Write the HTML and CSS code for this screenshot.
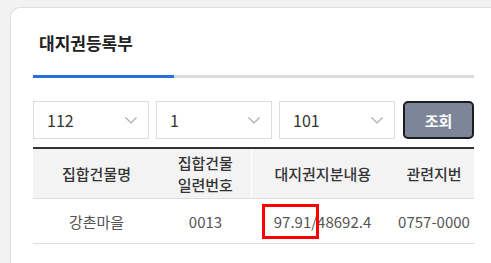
FILE: index.html
```html
<!DOCTYPE html>
<html>
<head>
  <title>대지권등록부</title>
  <link rel="stylesheet" href="styles.css">
</head>
<body>
  <div class="card">
    <h1 class="title">대지권등록부</h1>
    <div class="tab-bar"><div class="tab-active"></div></div>

    <div class="search">
      <div class="select"><span>112</span><svg class="chevron" viewBox="0 0 12 7"><path d="M0.5 0.5 L6 6 L11.5 0.5"/></svg></div>
      <div class="select"><span>1</span><svg class="chevron" viewBox="0 0 12 7"><path d="M0.5 0.5 L6 6 L11.5 0.5"/></svg></div>
      <div class="select"><span>101</span><svg class="chevron" viewBox="0 0 12 7"><path d="M0.5 0.5 L6 6 L11.5 0.5"/></svg></div>
      <button class="search-btn">조회</button>
    </div>

    <table class="result">
      <colgroup>
        <col class="c1"><col class="c2"><col class="c3"><col class="c4">
      </colgroup>
      <thead>
        <tr>
          <th>집합건물명</th>
          <th>집합건물<br>일련번호</th>
          <th class="sep">대지권지분내용</th>
          <th>관련지번</th>
        </tr>
      </thead>
      <tbody>
        <tr>
          <td>강촌마을</td>
          <td>0013</td>
          <td class="marked">97.91/48692.4<span class="highlight"></span></td>
          <td>0757-0000</td>
        </tr>
      </tbody>
    </table>
  </div>
</body>
</html>
```

FILE: styles.css
```css
body {
  margin: 0;
  background: #f2f2f2;
  font-family: "Noto Sans CJK KR", sans-serif;
  overflow: hidden;
}

.card {
  margin: 7px 0 0 10px;
  height: calc(100vh - 7px);
  background: #fff;
  border: 1px solid #ddd;
  border-right: none;
  border-bottom: none;
  border-radius: 10px 0 0 0;
  padding: 23px 0 0 22px;
  box-sizing: border-box;
}

.title {
  margin: 0 0 20px 6px;
  font-size: 17px;
  line-height: 24px;
  font-weight: 700;
  color: #222;
}

.tab-bar {
  width: 441px;
  height: 3px;
  background: #ddd;
}

.tab-active {
  width: 141px;
  height: 3px;
  background: #2670dc;
}

.search {
  display: flex;
  gap: 7px;
  width: 441px;
  margin-top: 23px;
}

.select {
  flex: 1;
  height: 38px;
  border: 1px solid #ddd;
  box-sizing: border-box;
  display: flex;
  align-items: center;
  justify-content: space-between;
  padding: 0 11px 0 13px;
  font-size: 16px;
  color: #333;
}

.chevron {
  width: 12px;
  height: 7px;
  fill: none;
  stroke: #aaa;
  stroke-width: 1.2;
}

.search-btn {
  width: 71px;
  height: 38px;
  margin-left: 1px;
  background: #7c8698;
  border: 2px solid #1c1c1c;
  border-radius: 5px;
  color: #fff;
  font-family: inherit;
  font-size: 15px;
  font-weight: 700;
}

.result {
  width: 441px;
  margin-top: 8px;
  border-collapse: collapse;
  table-layout: fixed;
  border-top: 2px solid #333;
}

.c1 { width: 127px; }
.c2 { width: 91px; }
.c3 { width: 143px; }
.c4 { width: 80px; }

.result th {
  height: 49px;
  padding: 0;
  background: #f3f3f3;
  border-bottom: 1px solid #ddd;
  font-size: 15px;
  font-weight: 500;
  line-height: 22px;
  color: #333;
}

.result th.sep {
  border-left: 1px solid #fff;
}

.result td {
  height: 44px;
  padding: 0;
  text-align: center;
  border-bottom: 1px solid #ddd;
  font-size: 15px;
  color: #555;
}

.result td.marked {
  position: relative;
}

.highlight {
  position: absolute;
  left: 11px;
  top: 5px;
  width: 57px;
  height: 35px;
  border: 3px solid #f00;
  box-sizing: border-box;
}
```
